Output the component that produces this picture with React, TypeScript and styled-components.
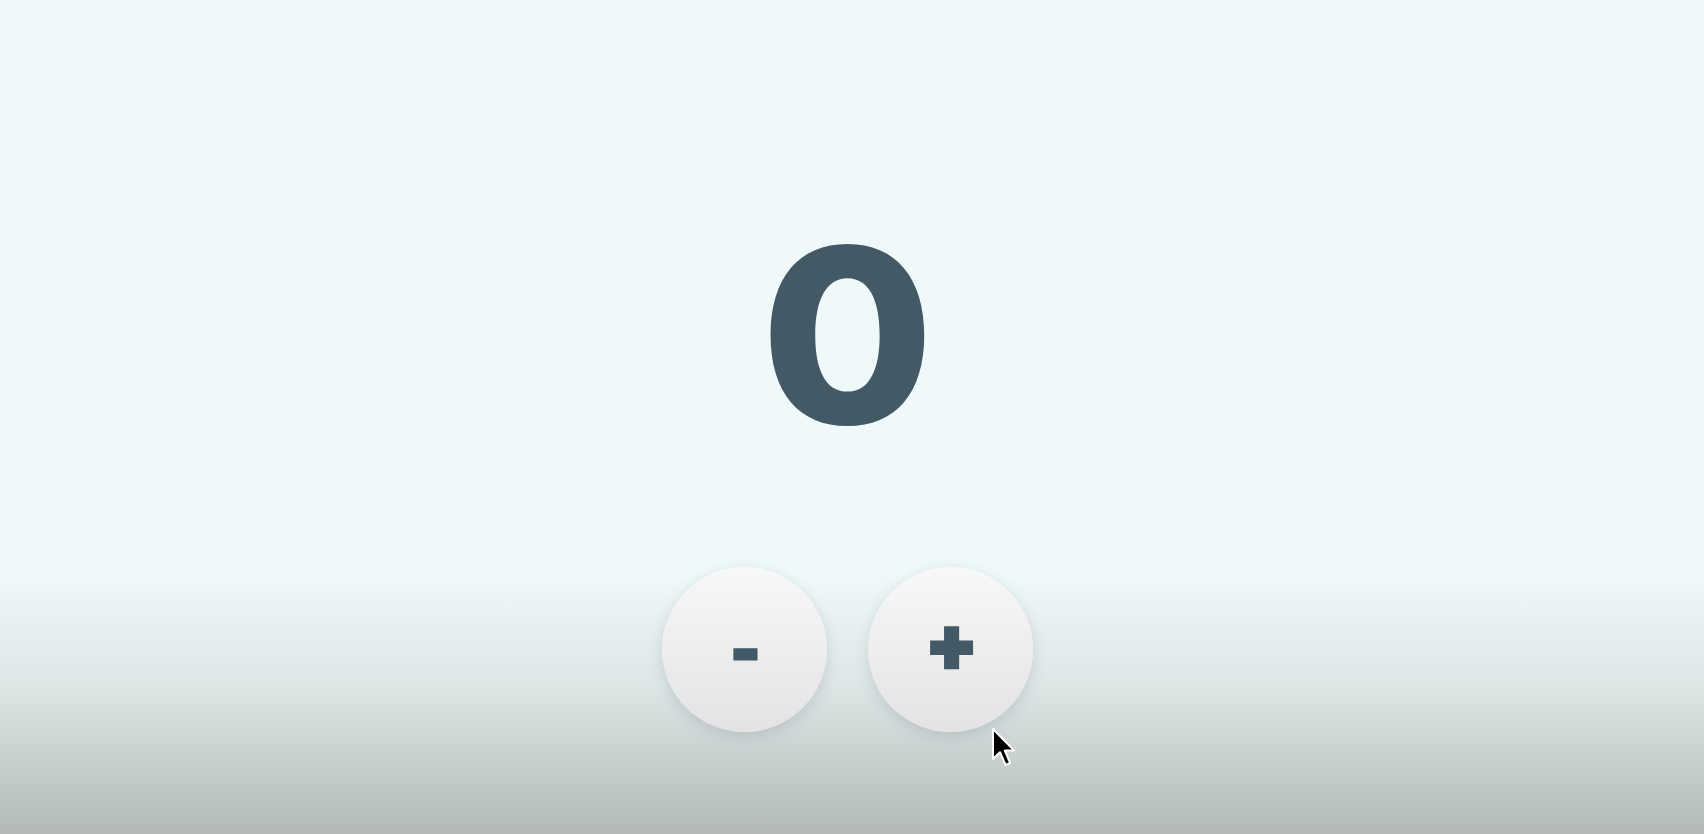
import * as React from 'react';
import styled, { createGlobalStyle } from 'styled-components';

const GlobalStyle = createGlobalStyle`
  html, body {
    margin: 0;
    padding: 0;
    height: 100%;
  }
  body {
    font-family: Inter, "Liberation Sans", sans-serif;
    background: #eff9f9;
  }
`

const Page = styled.div`
  position: relative;
  height: 100vh;
  min-height: 834px;
  display: flex;
  flex-direction: column;
  align-items: center;
  padding: 214px 9px 0 0;
  box-sizing: border-box;
  background: linear-gradient(to bottom, #eff9f9 0, #eff9f9 575px, #dfe7e7 680px, #b3b9b9 834px);
  overflow: hidden;
`

const Count = styled.h1`
  margin: 0;
  font-family: Inter, sans-serif;
  font-weight: 800;
  font-size: 244px;
  line-height: 244px;
  height: 244px;
  color: #435a66;
  transform: scaleX(1.03);
  user-select: none;
`

const ButtonRow = styled.div`
  display: flex;
  gap: 41px;
  margin-top: 109px;
`

const RoundButton = styled.button`
  width: 165px;
  height: 165px;
  border-radius: 50%;
  border: none;
  padding: 0;
  display: flex;
  align-items: center;
  justify-content: center;
  background: linear-gradient(to bottom, #f8f8f8, #e3e3e3);
  box-shadow: 0 4px 14px rgba(120, 140, 145, 0.28);
  cursor: pointer;
`

const Sign = styled.span<{ $size: number; $shift: string }>`
  display: block;
  color: #435a66;
  font-family: Inter, sans-serif;
  font-weight: 900;
  font-size: ${p => p.$size}px;
  line-height: 1;
  -webkit-text-stroke: 3px #435a66;
  transform: translate(${p => p.$shift});
`

const Cursor = styled.svg`
  position: absolute;
  left: 991px;
  top: 727px;
  pointer-events: none;
`

export default function App() {
  const [count, setCount] = React.useState(0);

  return (
    <>
      <GlobalStyle />
      <Page>
        <Count>{count}</Count>
        <ButtonRow>
          <RoundButton onClick={() => setCount(count - 1)}>
            <Sign $size={62} $shift="1px, 0">-</Sign>
          </RoundButton>
          <RoundButton onClick={() => setCount(count + 1)}>
            <Sign $size={76} $shift="1px, -8px">+</Sign>
          </RoundButton>
        </ButtonRow>
        <Cursor width="26" height="42" viewBox="0 0 13 21">
          <path d="M1 1 L1 16 L4.5 12.6 L7.3 19 L9.6 18 L6.9 11.8 L11.6 11.8 Z" fill="#000" stroke="#fff" strokeWidth="1" strokeLinejoin="round" />
        </Cursor>
      </Page>
    </>
  )
}
